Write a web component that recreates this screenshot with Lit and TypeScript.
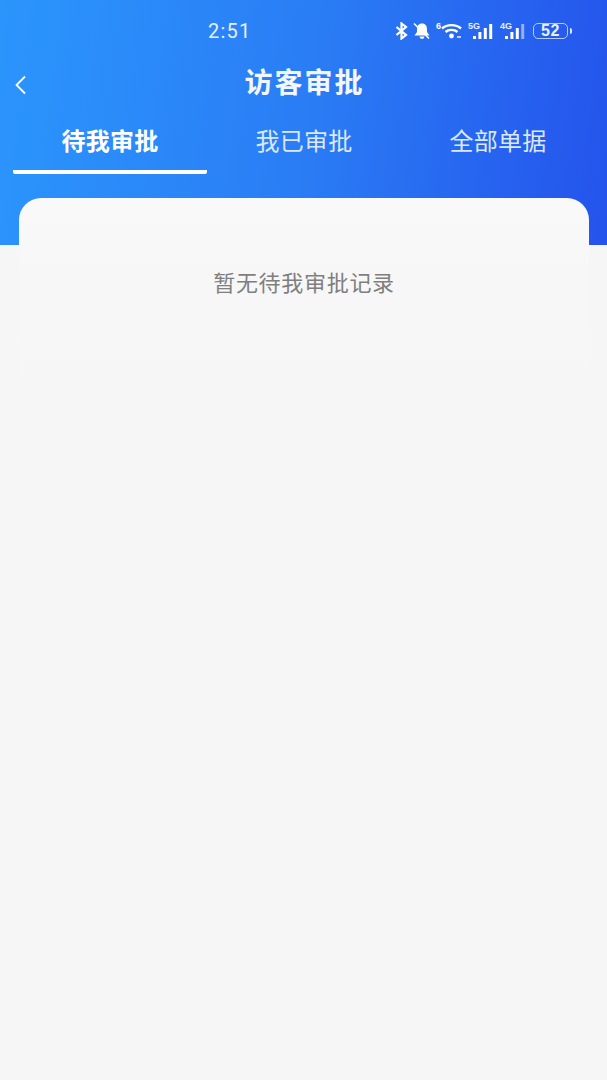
import { LitElement, css, html, svg } from "lit";
import { customElement } from "lit/decorators.js";

const bars = (count: number) =>
  [0, 1, 2, 3].map((i) => {
    const h = 3 + i * 4;
    return svg`<rect x=${i * 5.4} y=${15 - h} width="3" height=${h} fill="#fff" opacity=${i < count ? 1 : 0.5}></rect>`;
  });

@customElement("app-root")
export class AppRoot extends LitElement {
  static styles = css`
    :host {
      display: block;
      height: 1080px;
      background: #f6f6f6;
      font-family: "Liberation Sans", "Noto Sans CJK SC", sans-serif;
      overflow: hidden;
    }
    .header {
      height: 245px;
      background: linear-gradient(97deg, #2b95fc 0%, #2a7df5 50%, #2453ec 100%);
      color: #fff;
    }
    .status {
      height: 62px;
      display: flex;
      align-items: center;
      padding: 0 35px 0 208px;
      justify-content: space-between;
    }
    .time {
      font-family: "Roboto", sans-serif;
      font-size: 20px;
      letter-spacing: 1.2px;
      color: #e6effd;
    }
    .icons {
      display: flex;
      align-items: center;
      gap: 5px;
    }
    .icons svg {
      display: block;
    }
    .net {
      position: relative;
      width: 27px;
      height: 16px;
    }
    .net span {
      position: absolute;
      left: 1px;
      top: -1px;
      font-size: 9px;
      font-weight: 700;
      line-height: 9px;
      color: #e6effd;
    }
    .net svg {
      position: absolute;
      right: 0;
      bottom: 0;
    }
    .wifi {
      position: relative;
      width: 26px;
      height: 16px;
    }
    .wifi span {
      position: absolute;
      left: 0;
      top: -1px;
      font-size: 9px;
      font-weight: 700;
      line-height: 9px;
    }
    .battery {
      display: flex;
      align-items: center;
      gap: 2px;
      margin-left: 2px;
    }
    .battery b {
      width: 35px;
      height: 16px;
      box-sizing: border-box;
      border: 1.5px solid #b5ccfb;
      border-radius: 5px;
      font-family: "Liberation Sans", sans-serif;
      font-size: 16px;
      font-weight: 700;
      line-height: 13px;
      text-align: center;
      letter-spacing: 0.5px;
      color: #e9f0ff;
    }
    .battery i {
      width: 2px;
      height: 6px;
      background: #dfe9ff;
      border-radius: 0 2px 2px 0;
    }
    .nav {
      height: 44px;
      box-sizing: border-box;
      padding-bottom: 6px;
      display: flex;
      align-items: center;
      justify-content: center;
      position: relative;
    }
    .back {
      position: absolute;
      left: 14px;
      top: 13px;
    }
    .title {
      font-size: 28px;
      font-weight: 700;
      letter-spacing: 2px;
      margin-right: -2px;
      color: #f2f6fe;
    }
    .tabs {
      display: grid;
      grid-template-columns: 194px 194px 194px;
      margin: 0 0 0 13px;
      padding-top: 7px;
    }
    .tab {
      height: 61px;
      box-sizing: border-box;
      padding-top: 12px;
      text-align: center;
      font-size: 24px;
      letter-spacing: 0.3px;
      line-height: 33px;
      color: #dbe8fd;
    }
    .tab.active {
      font-weight: 700;
      color: #fff;
      border-bottom: 4px solid #fff;
      border-radius: 0 0 2px 2px;
    }
    .card {
      margin: -47px 18px 0 19px;
      height: 205px;
      border-radius: 22px 22px 0 0;
      background: linear-gradient(180deg, #f9f9f9 0%, #f7f7f7 40%, #f6f6f6 100%);
      box-sizing: border-box;
      padding-top: 71px;
      text-align: center;
      font-size: 22px;
      letter-spacing: 0.7px;
      line-height: 30px;
      color: #7f7f7f;
    }
  `;

  render() {
    return html`
      <div class="header">
        <div class="status">
          <span class="time">2:51</span>
          <div class="icons">
            <svg width="13" height="18" viewBox="0 0 13 18" fill="none" stroke="#fff" stroke-width="2.200">
              <path d="M1.500 5l9.500 8-4.500 3.500V1.500L11 5l-9.500 8" />
            </svg>
            <svg width="18" height="18" viewBox="0 0 18 18" fill="#fff">
              <path d="M9 1.500c-3.500 0-5 2.500-5 5.500v3l-2.500 3.500h15L14 10V7c0-3-1.500-5.500-5-5.500z" />
              <path d="M6.500 14.500h5a2.500 2.500 0 0 1-5 0z" />
              <path d="M1 1.500l15 15" stroke="#fff" stroke-width="1.600" />
            </svg>
            <div class="wifi">
              <span>6</span>
              <svg width="26" height="16" viewBox="0 0 26 16" fill="none" stroke="#fff" stroke-width="2.400">
                <path d="M6 5.500c5-4.500 14-4.500 19 0" />
                <path d="M9.500 9c3-2.800 9-2.800 12 0" />
                <circle cx="15.500" cy="13" r="2.400" fill="#fff" stroke="none" />
                <path d="M21 14h4" stroke-width="1.400" />
              </svg>
            </div>
            <div class="net">
              <span>5G</span>
              <svg width="21" height="15" viewBox="0 0 21 15">${bars(4)}</svg>
            </div>
            <div class="net">
              <span>4G</span>
              <svg width="21" height="15" viewBox="0 0 21 15">${bars(3)}</svg>
            </div>
            <div class="battery"><b>52</b><i></i></div>
          </div>
        </div>
        <div class="nav">
          <svg class="back" width="14" height="20" viewBox="0 0 14 20" fill="none" stroke="#fff" stroke-width="1.800">
            <path d="M11 1.500L2.500 10l8.500 8.500" />
          </svg>
          <span class="title">访客审批</span>
        </div>
        <div class="tabs">
          <div class="tab active">待我审批</div>
          <div class="tab">我已审批</div>
          <div class="tab">全部单据</div>
        </div>
      </div>
      <div class="card">暂无待我审批记录</div>
    `;
  }
}
